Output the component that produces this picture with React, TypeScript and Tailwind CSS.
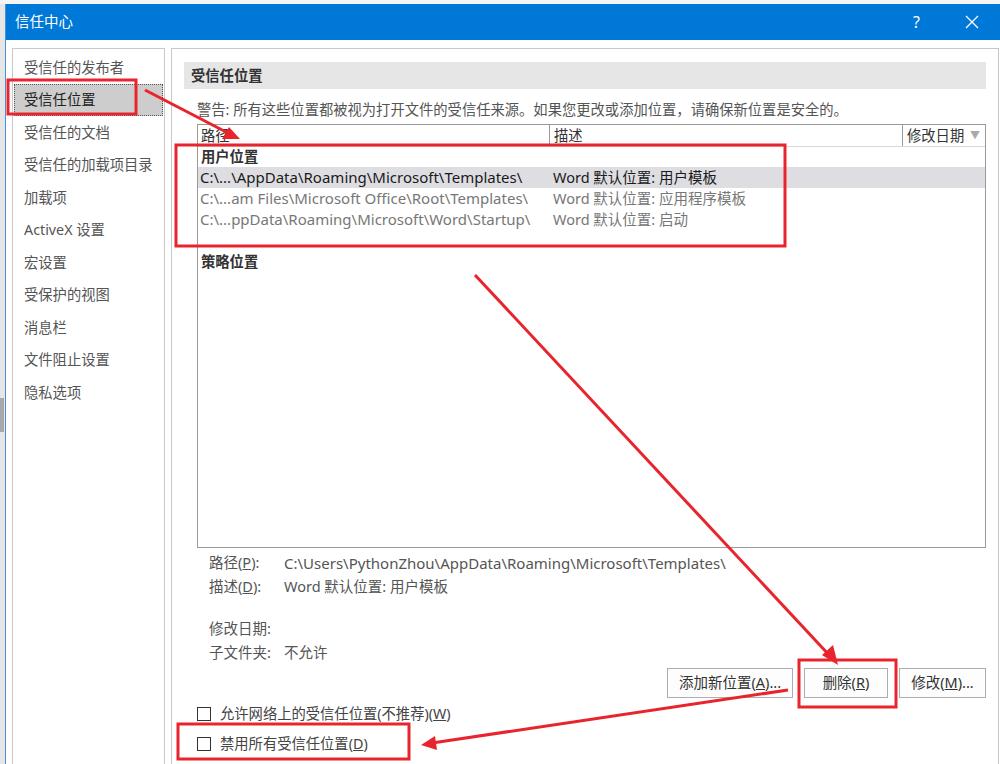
import React from "react";

const F = "font-['Noto_Sans','Noto_Sans_CJK_SC',sans-serif]";

const sideItems = [
  "受信任的发布者",
  "受信任位置",
  "受信任的文档",
  "受信任的加载项目录",
  "加载项",
  "ActiveX 设置",
  "宏设置",
  "受保护的视图",
  "消息栏",
  "文件阻止设置",
  "隐私选项",
];

function Checkbox({ label, u }: { label: string; u: string }) {
  return (
    <div className="flex items-center h-[30px]">
      <div className="w-[14px] h-[14px] border border-[#333] bg-white" />
      <span className="ml-[9px] text-[14.3px] text-[#444] leading-none">
        {label}(<span className="underline">{u}</span>)
      </span>
    </div>
  );
}

function Btn({ children, w }: { children: React.ReactNode; w: string }) {
  return (
    <div
      className={`${w} h-[30px] border border-[#adadad] bg-[#fdfdfd] flex items-center justify-center text-[14.5px] text-[#333]`}
    >
      {children}
    </div>
  );
}

export default function App() {
  return (
    <div className={`${F} relative w-[1000px] h-[764px] overflow-hidden bg-[#ececec] flex flex-col`}>
      {/* background window top strip */}
      <div className="h-[4px] bg-[#f5f5f5] shrink-0" />
      <div className="flex flex-1 min-h-0">
        {/* background window left strip */}
        <div className="w-[5px] bg-[#e6e6e6] shrink-0 flex flex-col">
          <div className="h-[394px]" />
          <div className="h-[34px] w-[4px] bg-[#a8a8a8]" />
        </div>
        {/* dialog */}
        <div className="flex-1 flex flex-col border-l border-[#4a90d9] bg-white min-w-0">
          <div className="h-[36px] bg-[#0078d7] flex items-center text-white shrink-0">
            <span className="ml-[9px] text-[14.5px]">信任中心</span>
            <div className="flex-1" />
            <span className="text-[16px] mr-[44px]">?</span>
            <svg width="16" height="16" viewBox="0 0 16 16" className="mr-[20px]">
              <path d="M2 2 L14 14 M14 2 L2 14" stroke="white" strokeWidth="1.3" />
            </svg>
          </div>
          <div className="flex-1 flex pt-[8px] pl-[6px] gap-[6px] min-h-0">
            {/* left nav */}
            <div className="w-[153px] border border-[#c8c8c8] pt-[2px] pl-[1px] pr-[1px] shrink-0 h-[730px]">
              {sideItems.map((s, i) => (
                <div
                  key={s}
                  className={`h-[32.5px] flex items-center pl-[10px] text-[14.3px] ${
                    i === 1
                      ? "bg-[#cdcdcd] text-[#222] outline-1 outline-dotted outline-[#555] -outline-offset-1"
                      : "text-[#555]"
                  }`}
                >
                  {s}
                </div>
              ))}
            </div>
            {/* right panel */}
            <div className="w-[828px] border border-[#c8c8c8] h-[730px] pl-[12px] pr-[12px] pt-[13px] flex flex-col">
              <div className="h-[27px] bg-[#e6e6e6] flex items-center pl-[7px] text-[14.3px] font-bold text-[#333]">
                受信任位置
              </div>
              <div className="pl-[13px] h-[29px] flex items-center text-[14.3px] text-[#555] mt-[6px] whitespace-nowrap">
                警告: 所有这些位置都被视为打开文件的受信任来源。如果您更改或添加位置，请确保新位置是安全的。
              </div>
              {/* list */}
              <div className="ml-[13px] border border-[#9a9a9a] h-[424px] flex flex-col">
                <div className="h-[22px] flex border-b border-[#d8d8d8] text-[14.3px] text-[#333] bg-white">
                  <div className="w-[352px] border-r border-[#9a9a9a] pl-[3px] flex items-center">路径</div>
                  <div className="w-[352px] border-r border-[#9a9a9a] pl-[3px] ml-[1px] flex items-center">描述</div>
                  <div className="flex-1 pl-[3px] ml-[1px] flex items-center justify-between pr-[5px]">
                    <span>修改日期</span>
                    <span className="text-[#aaa] text-[10px]">▼</span>
                  </div>
                </div>
                <div className="flex flex-col text-[14.5px] whitespace-nowrap">
                  <div className="h-[20px] flex items-center pl-[3px] font-bold text-[#333] text-[14.3px]">用户位置</div>
                  <div className="h-[21px] flex items-center bg-[#dedee2] text-[#1a1a1a]">
                    <span className="w-[355px] pl-[2px] text-[15px]">C:\...\AppData\Roaming\Microsoft\Templates\</span>
                    <span>Word 默认位置: 用户模板</span>
                  </div>
                  <div className="h-[21px] flex items-center text-[#777]">
                    <span className="w-[355px] pl-[2px] text-[15px]">C:\...am Files\Microsoft Office\Root\Templates\</span>
                    <span>Word 默认位置: 应用程序模板</span>
                  </div>
                  <div className="h-[21px] flex items-center text-[#777]">
                    <span className="w-[355px] pl-[2px] text-[15px]">C:\...ppData\Roaming\Microsoft\Word\Startup\</span>
                    <span>Word 默认位置: 启动</span>
                  </div>
                  <div className="h-[21px]" />
                  <div className="h-[21px] flex items-center pl-[3px] font-bold text-[#333] text-[14.3px]">策略位置</div>
                </div>
              </div>
              {/* details */}
              <div className="pl-[25px] mt-[3px] flex flex-col text-[14.5px] text-[#555] whitespace-nowrap">
                <div className="h-[24px] flex items-center">
                  <span className="w-[75px]">路径(<span className="underline">P</span>):</span>
                  <span className="text-[15px]">C:\Users\PythonZhou\AppData\Roaming\Microsoft\Templates\</span>
                </div>
                <div className="h-[24px] flex items-center">
                  <span className="w-[75px]">描述(<span className="underline">D</span>):</span>
                  <span>Word 默认位置: 用户模板</span>
                </div>
                <div className="h-[18px]" />
                <div className="h-[24px] flex items-center">
                  <span className="w-[75px]">修改日期:</span>
                </div>
                <div className="h-[24px] flex items-center">
                  <span className="w-[75px]">子文件夹:</span>
                  <span>不允许</span>
                </div>
              </div>
              <div className="flex justify-end gap-[11px] mt-[3px]">
                <Btn w="w-[126px]">
                  添加新位置(<span className="underline">A</span>)...
                </Btn>
                <Btn w="w-[84px]">
                  删除(<span className="underline">R</span>)
                </Btn>
                <Btn w="w-[87px]">
                  修改(<span className="underline">M</span>)...
                </Btn>
              </div>
              <div className="ml-[13px] mt-[1px] flex flex-col">
                <Checkbox label="允许网络上的受信任位置(不推荐)" u="W" />
                <Checkbox label="禁用所有受信任位置" u="D" />
              </div>
            </div>
          </div>
        </div>
      </div>

      {/* red annotations overlay */}
      <svg className="absolute inset-0 pointer-events-none" width="1000" height="764" viewBox="0 0 1000 764">
        <g stroke="#e8242c" strokeWidth="3" fill="none">
          <rect x="8" y="80" width="128" height="34" />
          <rect x="176" y="145" width="609" height="101" />
          <rect x="799" y="660" width="97" height="47" />
          <rect x="178" y="724" width="231" height="35" />
          <line x1="145" y1="90" x2="228" y2="133" />
          <line x1="475" y1="275" x2="830" y2="656" />
          <line x1="788" y1="690" x2="432" y2="743" />
        </g>
        <g fill="#e8242c">
          <polygon points="240,139 222,139 229,127" />
          <polygon points="838,665 822,655 833,645" />
          <polygon points="421,745 435,736 437,750" />
        </g>
      </svg>
    </div>
  );
}
